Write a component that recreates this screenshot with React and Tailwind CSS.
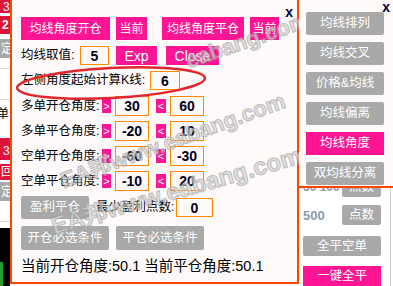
import React from 'react';

const FONT = "font-['Liberation_Sans','Noto_Sans_CJK_SC',sans-serif]";

const Btn = ({ className = '', gray = false, children }) => (
  <div
    className={`flex shrink-0 items-center justify-center whitespace-nowrap leading-none text-white ${
      gray ? 'rounded-[2px] bg-[#a9a9a9]' : 'bg-[#ff1493]'
    } ${className}`}
  >
    {children}
  </div>
);

const NumBox = ({ value, className = '' }) => (
  <div
    className={`flex shrink-0 items-center justify-center border border-[#ff8c00] bg-[#fffafa] text-[14px] font-black leading-none text-[#00001a] ${className}`}
  >
    {value}
  </div>
);

const Arrow = ({ sign, className = '' }) => (
  <div
    className={`flex h-[14px] w-[9px] shrink-0 items-center justify-center bg-[#ff1493] text-[11px] leading-none text-white ${className}`}
  >
    {sign}
  </div>
);

const AngleRow = ({ label, min, max }) => (
  <div className="flex h-[20px] items-center">
    <span className="w-[81px] shrink-0 whitespace-nowrap text-[12.5px] leading-none">{label}</span>
    <Arrow sign=">" />
    <NumBox value={min} className="ml-[4px] h-[20px] w-[34px]" />
    <Arrow sign="<" className="ml-[7px] w-[10px]" />
    <NumBox value={max} className="ml-[4px] h-[20px] w-[34px]" />
  </div>
);

// strip of the window that sits behind the popup
const LeftStrip = () => (
  <div className="flex w-[10px] shrink-0 flex-col overflow-hidden bg-white text-[12px] leading-none">
    <div className="flex h-[13px] items-end overflow-hidden bg-[#dc143c] pl-[3px] text-white">3</div>
    <div className="h-[3px]" />
    <div className="flex h-[18px] items-center bg-[#dc143c] pl-[2px] font-bold text-white">2</div>
    <div className="h-[5px]" />
    <div className="flex h-[19px] items-center whitespace-nowrap bg-[#a9a9a9] pl-[1px] text-white">定</div>
    <div className="h-[10px]" />
    <div className="h-px bg-[#dcdcdc]" />
    <div className="h-[30px]" />
    <div className="h-px bg-[#dcdcdc]" />
    <div className="flex h-[28px] items-center whitespace-nowrap text-black">
      <span className="-ml-[3px]">单</span>
    </div>
    <div className="h-[10px]" />
    <div className="flex h-[22px] items-end whitespace-nowrap bg-[#dc143c] pb-[3px] pl-[3px] text-white">3</div>
    <div className="h-[4px]" />
    <div className="flex h-[16px] items-center whitespace-nowrap bg-[#dc143c] pl-[1px] text-white">回</div>
    <div className="h-[2px]" />
    <div className="flex h-[19px] items-center whitespace-nowrap bg-[#a9a9a9] pl-[1px] text-white">定</div>
    <div className="h-[20px]" />
    <div className="h-px bg-[#dcdcdc]" />
    <div className="h-[6px]" />
    <div className="flex flex-1 items-end bg-black">
      <div className="h-[24px] w-[3px] bg-[#1e9e2e]" />
    </div>
  </div>
);

const MainPanel = () => (
  <div className="relative flex h-[284px] w-[289px] shrink-0 flex-col border-x-2 border-b-2 border-[#ff4500] bg-[#fffafa] pl-[9px] text-black">
    <div className="flex h-[17px] justify-end pr-[4px] pt-[5px]">
      <span className="text-[14px] font-bold leading-none text-[#000033]">x</span>
    </div>

    <div className="flex h-[23px] text-[12px]">
      <Btn className="w-[89px]">均线角度开仓</Btn>
      <Btn className="ml-[6px] w-[31px]">当前</Btn>
      <Btn className="ml-[15px] w-[82px]">均线角度平仓</Btn>
      <Btn className="ml-[6px] w-[29px]">当前</Btn>
    </div>

    <div className="mt-[6px] flex h-[19px] items-center">
      <span className="w-[59px] shrink-0 text-[12.5px] leading-none">均线取值:</span>
      <NumBox value="5" className="h-[19px] w-[29px]" />
      <Btn className="ml-[7px] h-[19px] w-[41px] text-[14px]">Exp</Btn>
      <Btn className="ml-[9px] h-[19px] w-[53px] text-[14px]">Close</Btn>
    </div>

    <div className="mt-[6px] flex h-[19px] items-center">
      <span className="w-[129px] shrink-0 whitespace-nowrap text-[12.5px] leading-none">左侧角度起始计算K线:</span>
      <NumBox value="6" className="h-[19px] w-[30px]" />
    </div>

    <div className="mt-[6px] flex flex-col gap-[5px]">
      <AngleRow label="多单开仓角度:" min="30" max="60" />
      <AngleRow label="多单平仓角度:" min="-20" max="10" />
      <AngleRow label="空单开仓角度:" min="-60" max="-30" />
      <AngleRow label="空单平仓角度:" min="-10" max="20" />
    </div>

    <div className="mt-[5px] flex h-[23px] items-center">
      <Btn gray className="h-[23px] w-[68px] text-[12.5px]">盈利平仓</Btn>
      <span className="ml-[7px] w-[80px] shrink-0 whitespace-nowrap text-[12.5px] leading-none">最少盈利点数:</span>
      <NumBox value="0" className="h-[19px] w-[37px]" />
    </div>

    <div className="mt-[7px] flex h-[24px]">
      <Btn gray className="w-[88px] text-[12.5px]">开仓必选条件</Btn>
      <Btn gray className="ml-[7px] w-[88px] text-[12.5px]">平仓必选条件</Btn>
    </div>

    <div className="mt-[8px] whitespace-nowrap text-[14.5px] leading-[16px]">
      当前开仓角度:50.1 当前平仓角度:50.1
    </div>
  </div>
);

const SidePanel = () => (
  <div className="relative z-10 flex h-[194px] flex-col border-b-2 border-[#ff4500] bg-[#fffafa] pl-[7px]">
    <div className="flex h-[12px] justify-end pr-[3px] pt-[2px]">
      <span className="text-[14px] font-bold leading-[10px] text-[#000033]">x</span>
    </div>
    <div className="flex flex-col gap-[7px] text-[12.5px]">
      <Btn gray className="h-[23px] w-[78px]">均线排列</Btn>
      <Btn gray className="h-[23px] w-[78px]">均线交叉</Btn>
      <Btn gray className="h-[23px] w-[78px]">价格&amp;均线</Btn>
      <Btn gray className="h-[23px] w-[78px]">均线偏离</Btn>
      <Btn className="h-[23px] w-[78px]">均线角度</Btn>
      <Btn gray className="h-[23px] w-[78px]">双均线分离</Btn>
    </div>
  </div>
);

const BehindRight = () => (
  <div className="flex-1 bg-white">
    <div className="flex h-full w-[92px] flex-col border-r border-[#cfcfcf] pl-[4px] text-[12.5px]">
      <div className="flex h-[9px] items-end overflow-hidden">
        <div className="flex h-[20px] shrink-0 items-center">
          <span className="w-[39px] text-[12px] font-bold text-[#8d99ab]">50 100</span>
          <Btn gray className="h-[20px] w-[39px]">点数</Btn>
        </div>
      </div>
      <div className="mt-[8px] flex h-[20px] items-center">
        <span className="w-[39px] text-[13px] font-black leading-none text-[#8d99ab]">500</span>
        <Btn gray className="h-[20px] w-[39px]">点数</Btn>
      </div>
      <Btn gray className="mt-[11px] h-[20px] w-[78px]">全平空单</Btn>
      <Btn className="mt-[10px] h-[20px] w-[78px]">一键全平</Btn>
    </div>
  </div>
);

const WATERMARK =
  "pointer-events-none absolute origin-bottom-left whitespace-nowrap font-bold leading-none text-[#d6d6d6] opacity-70 [-webkit-text-stroke:1px_#a3a3a3]";

export default function App() {
  return (
    <div className={`relative flex h-[286px] w-[393px] overflow-hidden bg-white ${FONT}`}>
      <LeftStrip />
      <MainPanel />
      <div className="flex w-[94px] shrink-0 flex-col">
        <SidePanel />
        <BehindRight />
      </div>

      <span className={`${WATERMARK} left-[190px] top-[50px] rotate-[-19deg] text-[22px]`}>eabang.com</span>
      <span className={`${WATERMARK} left-[65px] top-[170px] rotate-[-20deg] text-[22px]`}>EA邦www.eabang.com</span>
      <span className={`${WATERMARK} left-[55px] top-[214px] rotate-[-16deg] text-[24px]`}>EA邦www.eabang.com</span>

      <svg className="pointer-events-none absolute left-0 top-0" width="393" height="286">
        <ellipse
          cx="111"
          cy="83"
          rx="94"
          ry="15"
          transform="rotate(-3 111 83)"
          fill="none"
          stroke="#e3262b"
          strokeWidth="2.5"
        />
      </svg>
    </div>
  );
}
